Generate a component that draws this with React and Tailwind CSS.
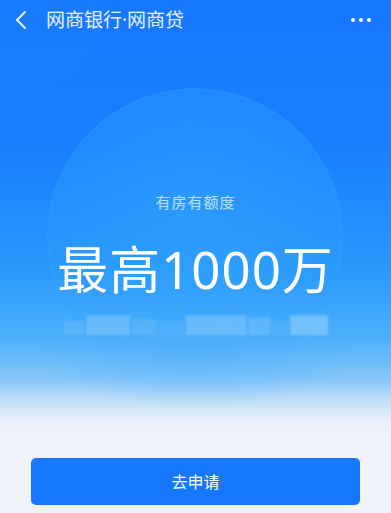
import React from "react";

export default function App() {
  const font = { fontFamily: '"Noto Sans", "Noto Sans CJK SC", sans-serif' };
  return (
    <div
      className="relative w-[391px] h-[513px] overflow-hidden bg-[linear-gradient(to_bottom,#1677ff_0%,#1a80fd_30%,#2898fc_52%,#4cb1fb_66%,#86c6f8_74%,#c0def8_78%,#e8f0fa_82%,#f0f4fa_85%,#f0f4fa_100%)]"
      style={font}
    >
      {/* decorative circles */}
      <div className="absolute left-[-55px] top-[-70px] w-[160px] h-[160px] rounded-full bg-[#2a8cff]/15" />
      <div className="absolute left-[47px] top-[88px] w-[296px] h-[296px] rounded-full bg-[radial-gradient(circle_at_50%_40%,rgba(56,172,255,0.45)_0%,rgba(46,160,255,0.3)_65%,rgba(60,175,255,0.25)_100%)] shadow-[inset_0_0_5px_rgba(120,220,255,0.15)] [mask-image:linear-gradient(to_bottom,black_60%,transparent_90%)]" />
      <div className="absolute left-0 right-0 top-[330px] h-[90px] bg-[radial-gradient(ellipse_at_50%_10%,rgba(70,170,252,0.5)_0%,rgba(70,170,252,0)_60%)]" />

      <div className="relative flex flex-col h-full">
        {/* header */}
        <div className="flex items-center h-[40px] px-[14px]">
          <svg width="14" height="20" viewBox="0 0 14 20" className="mr-[18px]">
            <path d="M11 2 L3 10 L11 18" fill="none" stroke="#e8f1ff" strokeWidth="2" strokeLinecap="round" strokeLinejoin="round" />
          </svg>
          <span className="text-[19px] text-[#e8f1ff] leading-none">网商银行·网商贷</span>
          <div className="ml-auto flex gap-[4px] mr-[6px]">
            <span className="w-[4px] h-[4px] rounded-full bg-white" />
            <span className="w-[4px] h-[4px] rounded-full bg-white" />
            <span className="w-[4px] h-[4px] rounded-full bg-white" />
          </div>
        </div>

        {/* content */}
        <div className="flex flex-col items-center pt-[155px]">
          <div className="text-[15px] leading-none text-white/70 tracking-[1px]">有房有额度</div>
          <div className="mt-[34px] text-[51px] leading-none text-white font-normal tracking-[1px]">最高1000万</div>
          <div className="mt-[16px] flex items-end gap-[2px] h-[24px] blur-[1px]">
            <div className="w-[20px] h-[14px] bg-white/10" />
            <div className="w-[44px] h-[20px] bg-white/20" />
            <div className="w-[24px] h-[16px] bg-white/10" />
            <div className="w-[26px] h-[14px] bg-white/5" />
            <div className="w-[60px] h-[20px] bg-white/20" />
            <div className="w-[22px] h-[18px] bg-white/15" />
            <div className="w-[16px] h-[14px] bg-white/5" />
            <div className="w-[38px] h-[20px] bg-white/25" />
          </div>
        </div>

        {/* button */}
        <div className="mt-auto px-[31px] pb-[8px]">
          <button className="w-full h-[47px] rounded-[5px] bg-[#1677ff] text-white text-[16px] flex items-center justify-center">
            去申请
          </button>
        </div>
      </div>
    </div>
  );
}
